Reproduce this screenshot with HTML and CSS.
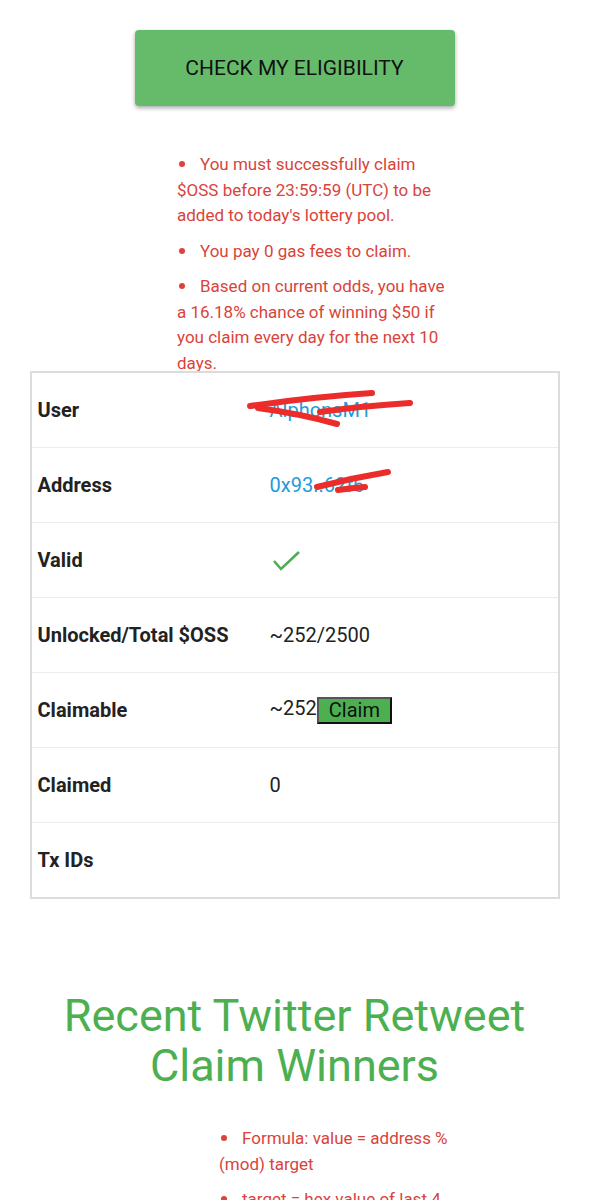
FILE: index.html
```html
<!DOCTYPE html>
<html>

<head>
  <link rel="stylesheet" href="styles.css">
</head>

<body>

  <div class="page">

    <button class="check-btn" type="button">Check my eligibility</button>

    <div class="notice">
      <ul class="rules">
        <li>You must successfully claim $OSS before 23:59:59 (UTC) to be added to today's lottery pool.</li>
        <li>You pay 0 gas fees to claim.</li>
        <li>Based on current odds, you have a 16.18% chance of winning $50 if you claim every day for the next 10 days.</li>
      </ul>
    </div>

    <table class="info">
      <tr>
        <th>User</th>
        <td class="marked">
          <a href="#">AlphonsM1</a>
          <svg class="scribble" viewBox="0 0 200 75">
            <path d="M-12 33 Q50 24 110 20" />
            <path d="M-4 35 Q40 41 75 51" />
            <path d="M58 39 Q100 33 148 30" />
          </svg>
        </td>
      </tr>
      <tr>
        <th>Address</th>
        <td class="marked">
          <a href="#">0x93..62f6</a>
          <svg class="scribble" viewBox="0 0 200 75">
            <path d="M55 39 Q90 30 126 24" />
            <path d="M76 42 Q90 40 103 39" />
          </svg>
        </td>
      </tr>
      <tr>
        <th>Valid</th>
        <td>
          <svg class="check" width="30" height="24" viewBox="0 0 30 24">
            <polyline points="2,13 9,21 27,4" />
          </svg>
        </td>
      </tr>
      <tr>
        <th>Unlocked/Total $OSS</th>
        <td>~252/2500</td>
      </tr>
      <tr>
        <th>Claimable</th>
        <td>~252<button class="claim-btn" type="button">Claim</button></td>
      </tr>
      <tr>
        <th>Claimed</th>
        <td>0</td>
      </tr>
      <tr>
        <th>Tx IDs</th>
        <td></td>
      </tr>
    </table>

    <h1 class="winners">Recent Twitter Retweet Claim Winners</h1>

    <ul class="rules formula">
      <li>Formula: value = address % (mod) target</li>
      <li>target = hex value of last 4 characters of the tweet id</li>
      <li>Winner is the address with the lowest value.</li>
    </ul>

  </div>

</body>

</html>
```

FILE: styles.css
```css
body {
  margin: 0;
  font-family: Roboto, "Liberation Sans", sans-serif;
  color: #222;
  background: #fff;
}

.page {
  padding-top: 30px;
}

.check-btn {
  display: block;
  width: 320px;
  height: 76px;
  margin: 0 auto;

  border: none;
  border-radius: 4px;
  box-shadow: 0 2px 4px rgba(0, 0, 0, .35);

  background-color: #66bb6a;
  color: #111;

  font-family: inherit;
  font-size: 21px;
  text-transform: uppercase;
}

/* red notes under the button */
.notice {
  height: 219px;
  margin-top: 46px;
  overflow: hidden;
}

.rules {
  width: 275px;
  margin: 0 auto;
  padding: 0 0 0 40px;
  list-style: none;
  color: #d9443a;
  font-size: 17px;
  line-height: 1.5;
}

.rules li {
  margin-bottom: 10px;
}

.rules li:before {
  content: "";
  display: inline-block;
  width: 6px;
  height: 6px;
  margin: 0 15px 0 2px;
  border-radius: 50%;
  background-color: #d9443a;
  vertical-align: 3px;
}

/* info table */
.info {
  width: 530px;
  margin: 0 auto;
  border-collapse: collapse;
  border: 2px solid #dcdcdc;
  table-layout: fixed;
  font-size: 20px;
}

.info th,
.info td {
  height: 74px;
  padding: 0 8px 0 6px;
  border-bottom: 1px solid #ececec;
  text-align: left;
  vertical-align: middle;
}

.info th {
  width: 216px;
  font-weight: bold;
  color: #222;
}

.info td {
  padding-left: 8px;
  color: #222;
}

.info a {
  color: #1e9bd7;
  text-decoration: none;
}

.marked {
  position: relative;
}

.scribble {
  position: absolute;
  top: 0;
  left: 0;
  width: 200px;
  height: 75px;
  overflow: visible;
}

.scribble path {
  fill: none;
  stroke: #ec2b2b;
  stroke-width: 6;
  stroke-linecap: round;
}

.check {
  display: block;
  margin-left: 2px;
}

.check polyline {
  fill: none;
  stroke: #4caf50;
  stroke-width: 2.6;
}

.claim-btn {
  margin: 0;
  padding: 0 10px;
  border-width: 2px;
  border-style: solid;
  border-color: #555 #111 #111 #555;
  background-color: #4caf50;
  color: #111;
  font-family: inherit;
  font-size: 20px;
  line-height: 23px;
  vertical-align: middle;
}

/* winners section */
.winners {
  width: 530px;
  margin: 92px auto 35px;
  color: #4caf50;
  font-size: 45px;
  font-weight: normal;
  line-height: 50px;
  text-align: center;
}

.formula {
  width: 250px;
  margin: 0 0 0 179px;
}
```
